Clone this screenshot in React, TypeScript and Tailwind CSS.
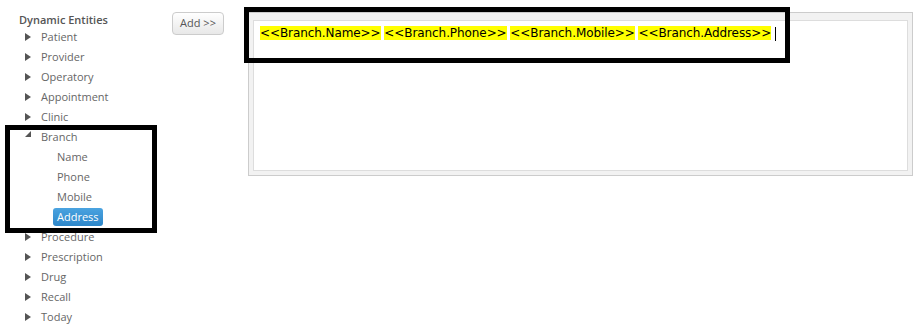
import React from 'react';

type Node = { label: string; open?: boolean; children?: string[]; selected?: string };

const entities: Node[] = [
  { label: 'Patient' },
  { label: 'Provider' },
  { label: 'Operatory' },
  { label: 'Appointment' },
  { label: 'Clinic' },
  { label: 'Branch', open: true, children: ['Name', 'Phone', 'Mobile', 'Address'], selected: 'Address' },
  { label: 'Procedure' },
  { label: 'Prescription' },
  { label: 'Drug' },
  { label: 'Recall' },
  { label: 'Today' },
];

const tags = ['<<Branch.Name>>', '<<Branch.Phone>>', '<<Branch.Mobile>>', '<<Branch.Address>>'];

function Arrow({ open }: { open?: boolean }) {
  if (open) {
    return (
      <svg width="6" height="6" viewBox="0 0 6 6" className="mb-[6px]">
        <polygon points="6,0 6,6 0,6" fill="#555" />
      </svg>
    );
  }
  return (
    <svg width="6" height="8" viewBox="0 0 6 8">
      <polygon points="0,0 6,4 0,8" fill="#555" />
    </svg>
  );
}

export default function App() {
  return (
    <div className="relative flex w-[922px] h-[332px] bg-white font-['Open_Sans',sans-serif] text-[11px] text-[#666]">
      {/* Entity tree */}
      <div className="w-[172px] shrink-0 pl-[19px] pt-[12px]">
        <div className="h-[15px] leading-[16px] font-semibold text-[#555]">Dynamic Entities</div>
        <ul>
          {entities.map((e) => (
            <li key={e.label}>
              <div className="flex items-center h-[20px] pl-[6px]">
                <span className="w-[16px] flex items-center">
                  <Arrow open={e.open} />
                </span>
                <span>{e.label}</span>
              </div>
              {e.open &&
                e.children?.map((c) => (
                  <div key={c} className="flex items-center h-[20px] pl-[34px]">
                    <span
                      className={
                        c === e.selected
                          ? 'px-[4px] h-[18px] leading-[18px] rounded-[3px] bg-gradient-to-b from-[#4aa3e0] to-[#2c86c9] text-white'
                          : 'px-[4px]'
                      }
                    >
                      {c}
                    </span>
                  </div>
                ))}
            </li>
          ))}
        </ul>
      </div>

      {/* Add button */}
      <div className="pt-[12px] shrink-0">
        <button className="w-[52px] h-[23px] rounded-[4px] border border-[#ccc] bg-gradient-to-b from-white to-[#e8e8e8] text-[11px] text-[#555]">
          Add &gt;&gt;
        </button>
      </div>

      {/* Editor */}
      <div className="ml-[24px] mt-[12px] w-[665px] h-[164px] shrink-0 border border-[#ccc] bg-[#f2f2f2] pt-[7px] px-[4px] pb-[4px]">
        <div className="h-full border border-[#ddd] bg-white px-[6px] pt-[5px] font-['DejaVu_Sans',sans-serif] text-[12px] tracking-[-0.08px] text-black leading-[15px]">
          {tags.map((t, i) => (
            <React.Fragment key={t}>
              <span className="bg-[#ffff00]">{t}</span>
              {i < tags.length - 1 ? ' ' : null}
            </React.Fragment>
          ))}
          <span className="inline-block align-middle ml-[4px] w-px h-[14px] bg-black" />
        </div>
      </div>

      {/* Annotation boxes */}
      <div className="absolute left-[244px] top-[7px] w-[546px] h-[56px] border-[5px] border-black pointer-events-none" />
      <div className="absolute left-[5px] top-[125px] w-[152px] h-[108px] border-[5px] border-black pointer-events-none" />
    </div>
  );
}
